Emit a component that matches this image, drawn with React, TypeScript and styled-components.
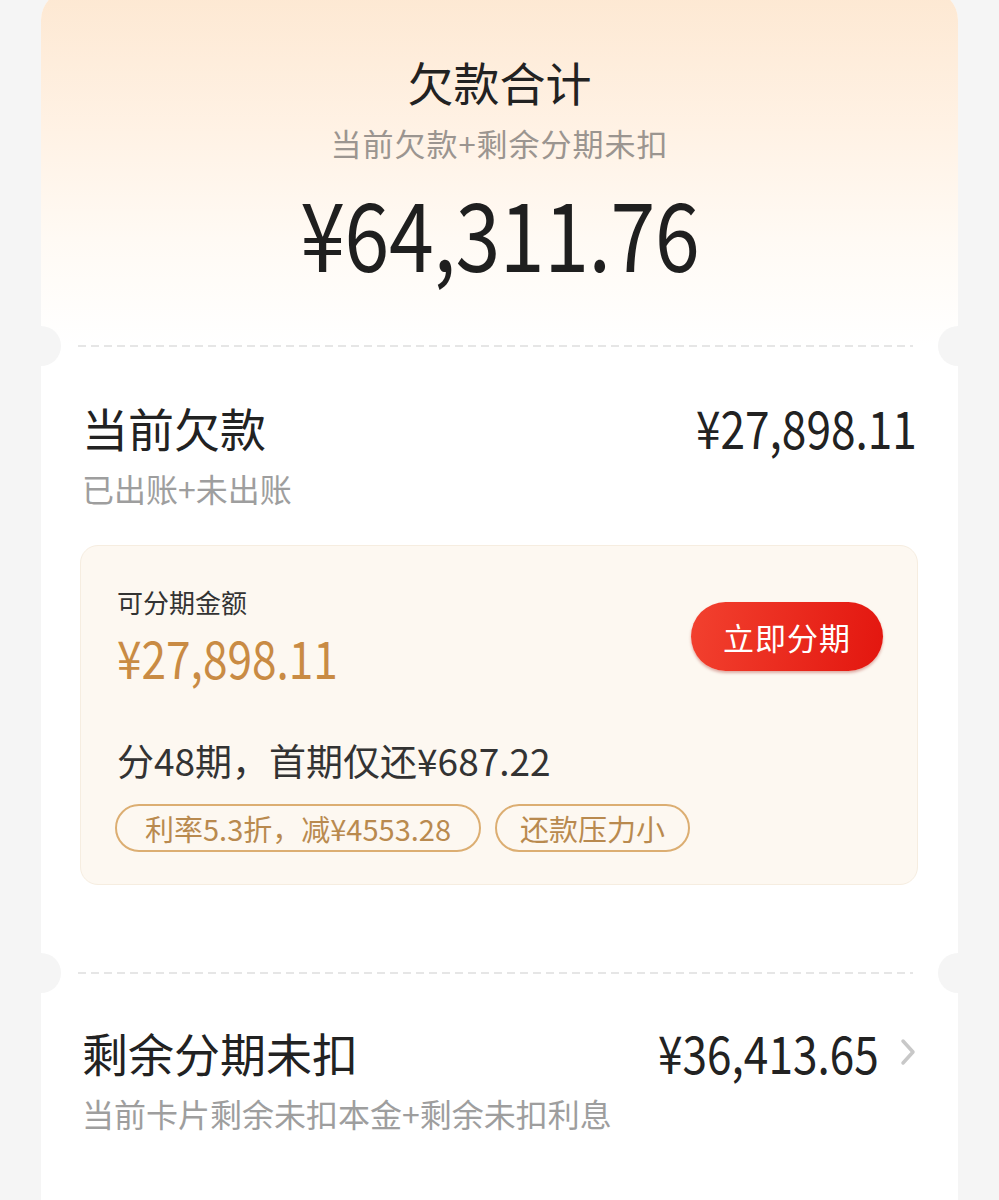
import styled, { createGlobalStyle } from 'styled-components'

const GlobalStyle = createGlobalStyle`
  html, body {
    margin: 0;
    padding: 0;
    background: #f5f5f5;
  }
  body {
    font-family: "Noto Sans CJK SC", "Noto Sans", sans-serif;
    color: #222;
  }
`

const Page = styled.main`
  width: 999px;
  height: 1200px;
  overflow: hidden;
  display: flex;
  justify-content: center;
`

const Card = styled.div`
  width: 917px;
  margin-top: -10px;
  display: flex;
  flex-direction: column;
  background: #fff;
  border-radius: 30px 30px 0 0;
  height: 1240px;
`

const Summary = styled.section`
  display: flex;
  flex-direction: column;
  align-items: center;
  padding: 63px 0 67px;
  border-radius: 30px 30px 0 0;
  background: linear-gradient(180deg, #fde8d2 0%, #fff2e5 40%, #fffaf4 70%, #ffffff 100%);
`

const SummaryTitle = styled.h1`
  margin: 0;
  font-size: 46px;
  line-height: 56px;
  font-weight: 400;
  color: #222;
`

const SummaryHint = styled.p`
  margin: 15px 0 0;
  font-size: 31px;
  line-height: 38px;
  letter-spacing: 1px;
  color: #9b9590;
`

/* digits in the shot are narrower than any installed face, so squeeze them */
const Narrow = styled.span<{ $origin?: 'left' | 'center' | 'right' }>`
  display: inline-block;
  transform: scaleX(0.85);
  transform-origin: ${({ $origin }) => $origin ?? 'center'};
`

const BigAmount = styled.div`
  margin-top: 21px;
  font-size: 95px;
  line-height: 96px;
  letter-spacing: -0.5px;
  color: #1f1f1f;
`

const Perforation = styled.div`
  position: relative;
  height: 0;
`

const Dash = styled.div`
  position: absolute;
  left: 37px;
  right: 45px;
  top: -1px;
  height: 2px;
  background: repeating-linear-gradient(90deg, #e6e6e6 0 8px, transparent 8px 13px);
`

const Notch = styled.span<{ $side: 'left' | 'right' }>`
  position: absolute;
  top: -20px;
  ${({ $side }) => ($side === 'left' ? 'left: -20px;' : 'right: -20px;')}
  width: 40px;
  height: 40px;
  border-radius: 50%;
  background: #f5f5f5;
`

const Block = styled.section<{ $top: number; $bottom: number }>`
  display: flex;
  flex-direction: column;
  padding: ${({ $top }) => $top}px 41px ${({ $bottom }) => $bottom}px;
`

const Row = styled.div`
  display: flex;
  justify-content: space-between;
  align-items: flex-start;
`

const RowTitle = styled.h2`
  margin: 0;
  font-size: 46px;
  line-height: 56px;
  font-weight: 400;
  color: #222;
`

const RowAmount = styled.div`
  display: flex;
  align-items: center;
  gap: 20px;
  font-size: 52px;
  line-height: 56px;
  color: #222;
`

const RowHint = styled.p`
  margin: 14px 0 0;
  font-size: 32px;
  line-height: 38px;
  color: #9e9e9e;
`

const Offer = styled.div`
  margin-top: 38px;
  margin-left: -2px;
  margin-right: -1px;
  padding: 39px 34px 32px 36px;
  background: #fdf8f1;
  border: 1px solid #f6ede0;
  border-radius: 18px;
  display: flex;
  flex-direction: column;
`

const OfferTop = styled.div`
  display: flex;
  justify-content: space-between;
  align-items: center;
`

const OfferLabel = styled.div`
  font-size: 26px;
  line-height: 34px;
  color: #333;
`

const OfferAmount = styled.div`
  margin-top: 8px;
  font-size: 52px;
  line-height: 60px;
  color: #c98b44;
`

const ActionButton = styled.button`
  width: 192px;
  height: 69px;
  border: none;
  border-radius: 35px;
  background: linear-gradient(100deg, #f2412f 0%, #e3160f 100%);
  box-shadow: 0 2px 3px rgb(160 30 20 / 35%);
  color: #fff;
  font-family: inherit;
  font-size: 31px;
  letter-spacing: 1px;
  cursor: pointer;
`

const Plan = styled.div`
  margin-top: 51px;
  font-size: 37px;
  line-height: 44px;
  color: #333;
`

const Tags = styled.div`
  margin: 22px 0 0 -2px;
  display: flex;
  gap: 14px;
`

const Tag = styled.span<{ $pad: number }>`
  height: 48px;
  box-sizing: border-box;
  display: inline-flex;
  align-items: center;
  padding: 0 ${({ $pad }) => $pad}px;
  border: 2px solid #dcae72;
  border-radius: 24px;
  font-size: 29px;
  color: #b98a4f;
`

function Chevron() {
  return (
    <svg width="18" height="28" viewBox="0 0 18 28" fill="none">
      <path d="M4 3 L14 14 L4 25" stroke="#c8c8c8" strokeWidth="3.5" strokeLinecap="round" strokeLinejoin="round" />
    </svg>
  )
}

function Divider() {
  return (
    <Perforation>
      <Notch $side="left" />
      <Dash />
      <Notch $side="right" />
    </Perforation>
  )
}

export default function App() {
  return (
    <>
      <GlobalStyle />
      <Page>
        <Card>
          <Summary>
            <SummaryTitle>欠款合计</SummaryTitle>
            <SummaryHint>当前欠款+剩余分期未扣</SummaryHint>
            <BigAmount>
              <Narrow>¥64,311.76</Narrow>
            </BigAmount>
          </Summary>
          <Divider />
          <Block $top={53} $bottom={88}>
            <Row>
              <RowTitle>当前欠款</RowTitle>
              <RowAmount>
                <Narrow $origin="right">¥27,898.11</Narrow>
              </RowAmount>
            </Row>
            <RowHint>已出账+未出账</RowHint>
            <Offer>
              <OfferTop>
                <div>
                  <OfferLabel>可分期金额</OfferLabel>
                  <OfferAmount>
                    <Narrow $origin="left">¥27,898.11</Narrow>
                  </OfferAmount>
                </div>
                <ActionButton>立即分期</ActionButton>
              </OfferTop>
              <Plan>分48期，首期仅还¥687.22</Plan>
              <Tags>
                <Tag $pad={28}>利率5.3折，减¥4553.28</Tag>
                <Tag $pad={23}>还款压力小</Tag>
              </Tags>
            </Offer>
          </Block>
          <Divider />
          <Block $top={51} $bottom={80}>
            <Row>
              <RowTitle>剩余分期未扣</RowTitle>
              <RowAmount>
                <Narrow $origin="right">¥36,413.65</Narrow>
                <Chevron />
              </RowAmount>
            </Row>
            <RowHint>当前卡片剩余未扣本金+剩余未扣利息</RowHint>
          </Block>
        </Card>
      </Page>
    </>
  )
}
